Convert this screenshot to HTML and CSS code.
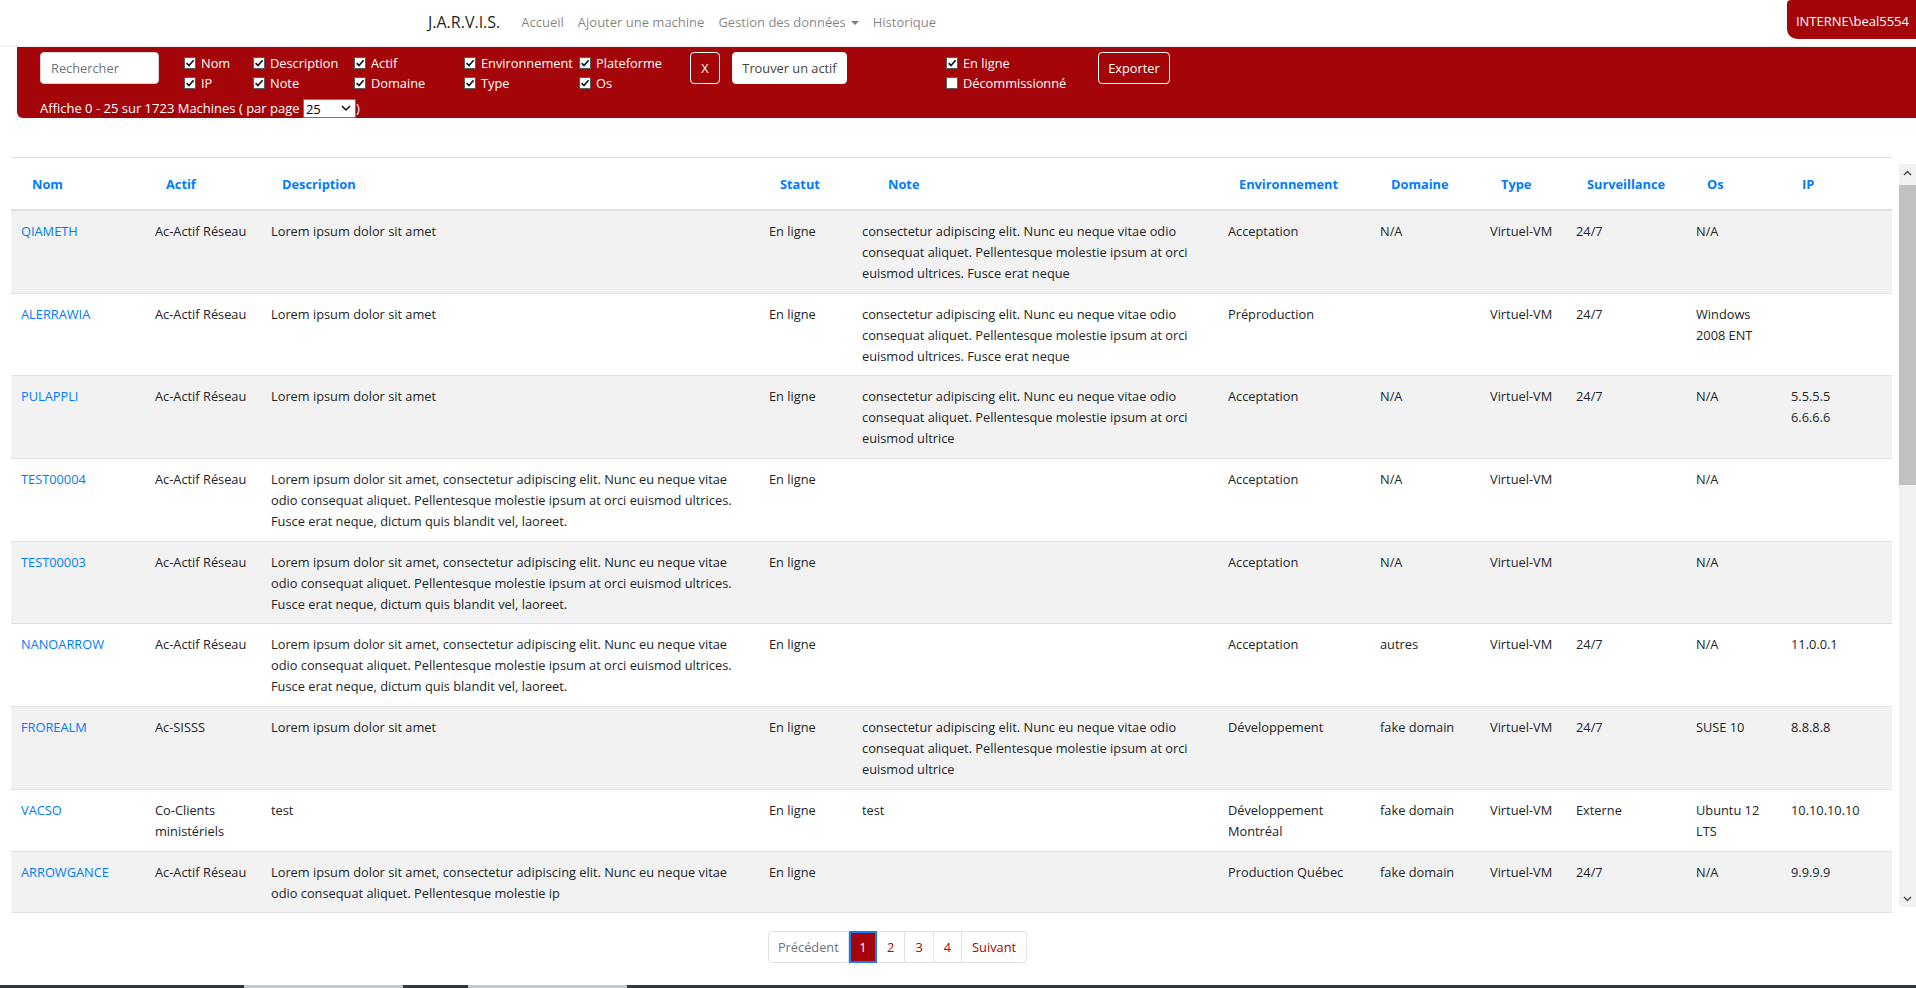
FILE: index.html
```html
<!DOCTYPE html>
<html lang="fr">
<head>
<meta charset="utf-8">
<title>J.A.R.V.I.S.</title>
<link rel="stylesheet" href="styles.css">
</head>
<body>
<header class="navbar">
  <a class="brand">J.A.R.V.I.S.</a>
  <nav class="nav">
    <a class="nav-link">Accueil</a>
    <a class="nav-link">Ajouter une machine</a>
    <a class="nav-link">Gestion des données<span class="caret"></span></a>
    <a class="nav-link">Historique</a>
  </nav>
  <div class="user">INTERNE\beal5554</div>
</header>

<section class="filters">
  <div class="filter-row">
    <input class="search" type="text" placeholder="Rechercher">
    <div class="cb-group g1">
      <label class="cb"><span class="box"><svg viewBox="0 0 10 10"><path d="M1.6 5.2 L4 7.6 L8.6 2.2"/></svg></span>Nom</label>
      <label class="cb"><span class="box"><svg viewBox="0 0 10 10"><path d="M1.6 5.2 L4 7.6 L8.6 2.2"/></svg></span>IP</label>
    </div>
    <div class="cb-group g2">
      <label class="cb"><span class="box"><svg viewBox="0 0 10 10"><path d="M1.6 5.2 L4 7.6 L8.6 2.2"/></svg></span>Description</label>
      <label class="cb"><span class="box"><svg viewBox="0 0 10 10"><path d="M1.6 5.2 L4 7.6 L8.6 2.2"/></svg></span>Note</label>
    </div>
    <div class="cb-group g3">
      <label class="cb"><span class="box"><svg viewBox="0 0 10 10"><path d="M1.6 5.2 L4 7.6 L8.6 2.2"/></svg></span>Actif</label>
      <label class="cb"><span class="box"><svg viewBox="0 0 10 10"><path d="M1.6 5.2 L4 7.6 L8.6 2.2"/></svg></span>Domaine</label>
    </div>
    <div class="cb-group g4">
      <label class="cb"><span class="box"><svg viewBox="0 0 10 10"><path d="M1.6 5.2 L4 7.6 L8.6 2.2"/></svg></span>Environnement</label>
      <label class="cb"><span class="box"><svg viewBox="0 0 10 10"><path d="M1.6 5.2 L4 7.6 L8.6 2.2"/></svg></span>Type</label>
    </div>
    <div class="cb-group g5">
      <label class="cb"><span class="box"><svg viewBox="0 0 10 10"><path d="M1.6 5.2 L4 7.6 L8.6 2.2"/></svg></span>Plateforme</label>
      <label class="cb"><span class="box"><svg viewBox="0 0 10 10"><path d="M1.6 5.2 L4 7.6 L8.6 2.2"/></svg></span>Os</label>
    </div>
    <button class="btn btn-x">X</button>
    <button class="btn btn-find">Trouver un actif</button>
    <div class="cb-group g6">
      <label class="cb"><span class="box"><svg viewBox="0 0 10 10"><path d="M1.6 5.2 L4 7.6 L8.6 2.2"/></svg></span>En ligne</label>
      <label class="cb"><span class="box"></span>Décommissionné</label>
    </div>
    <button class="btn btn-export">Exporter</button>
  </div>
  <div class="info">Affiche 0 - 25 sur 1723 Machines ( par page <span class="select-wrap"><select><option>25</option><option>50</option><option>100</option></select><svg class="chev" viewBox="0 0 10 6"><path d="M1 1 L5 5 L9 1"/></svg></span>)</div>
</section>

<main class="table-area">
  <div class="scroll">
    <table class="grid">
      <colgroup>
        <col class="c-nom"><col class="c-actif"><col class="c-desc"><col class="c-statut"><col class="c-note"><col class="c-env"><col class="c-dom"><col class="c-type"><col class="c-surv"><col class="c-os"><col class="c-ip">
      </colgroup>
      <thead>
        <tr><th>Nom</th><th>Actif</th><th>Description</th><th>Statut</th><th class="th-note">Note</th><th>Environnement</th><th>Domaine</th><th>Type</th><th>Surveillance</th><th>Os</th><th>IP</th></tr>
      </thead>
      <tbody>
        <tr><td><a>QIAMETH</a></td><td>Ac-Actif Réseau</td><td>Lorem ipsum dolor sit amet</td><td>En ligne</td><td>consectetur adipiscing elit. Nunc eu neque vitae odio consequat aliquet. Pellentesque molestie ipsum at orci euismod ultrices. Fusce erat neque</td><td>Acceptation</td><td>N/A</td><td>Virtuel-VM</td><td>24/7</td><td>N/A</td><td></td></tr>
        <tr><td><a>ALERRAWIA</a></td><td>Ac-Actif Réseau</td><td>Lorem ipsum dolor sit amet</td><td>En ligne</td><td>consectetur adipiscing elit. Nunc eu neque vitae odio consequat aliquet. Pellentesque molestie ipsum at orci euismod ultrices. Fusce erat neque</td><td>Préproduction</td><td></td><td>Virtuel-VM</td><td>24/7</td><td>Windows 2008 ENT</td><td></td></tr>
        <tr><td><a>PULAPPLI</a></td><td>Ac-Actif Réseau</td><td>Lorem ipsum dolor sit amet</td><td>En ligne</td><td>consectetur adipiscing elit. Nunc eu neque vitae odio consequat aliquet. Pellentesque molestie ipsum at orci euismod ultrice</td><td>Acceptation</td><td>N/A</td><td>Virtuel-VM</td><td>24/7</td><td>N/A</td><td>5.5.5.5<br>6.6.6.6</td></tr>
        <tr><td><a>TEST00004</a></td><td>Ac-Actif Réseau</td><td>Lorem ipsum dolor sit amet, consectetur adipiscing elit. Nunc eu neque vitae odio consequat aliquet. Pellentesque molestie ipsum at orci euismod ultrices. Fusce erat neque, dictum quis blandit vel, laoreet.</td><td>En ligne</td><td></td><td>Acceptation</td><td>N/A</td><td>Virtuel-VM</td><td></td><td>N/A</td><td></td></tr>
        <tr><td><a>TEST00003</a></td><td>Ac-Actif Réseau</td><td>Lorem ipsum dolor sit amet, consectetur adipiscing elit. Nunc eu neque vitae odio consequat aliquet. Pellentesque molestie ipsum at orci euismod ultrices. Fusce erat neque, dictum quis blandit vel, laoreet.</td><td>En ligne</td><td></td><td>Acceptation</td><td>N/A</td><td>Virtuel-VM</td><td></td><td>N/A</td><td></td></tr>
        <tr><td><a>NANOARROW</a></td><td>Ac-Actif Réseau</td><td>Lorem ipsum dolor sit amet, consectetur adipiscing elit. Nunc eu neque vitae odio consequat aliquet. Pellentesque molestie ipsum at orci euismod ultrices. Fusce erat neque, dictum quis blandit vel, laoreet.</td><td>En ligne</td><td></td><td>Acceptation</td><td>autres</td><td>Virtuel-VM</td><td>24/7</td><td>N/A</td><td>11.0.0.1</td></tr>
        <tr><td><a>FROREALM</a></td><td>Ac-SISSS</td><td>Lorem ipsum dolor sit amet</td><td>En ligne</td><td>consectetur adipiscing elit. Nunc eu neque vitae odio consequat aliquet. Pellentesque molestie ipsum at orci euismod ultrice</td><td>Développement</td><td>fake domain</td><td>Virtuel-VM</td><td>24/7</td><td>SUSE 10</td><td>8.8.8.8</td></tr>
        <tr><td><a>VACSO</a></td><td>Co-Clients ministériels</td><td>test</td><td>En ligne</td><td>test</td><td>Développement Montréal</td><td>fake domain</td><td>Virtuel-VM</td><td>Externe</td><td>Ubuntu 12 LTS</td><td>10.10.10.10</td></tr>
        <tr><td><a>ARROWGANCE</a></td><td>Ac-Actif Réseau</td><td>Lorem ipsum dolor sit amet, consectetur adipiscing elit. Nunc eu neque vitae odio consequat aliquet. Pellentesque molestie ip</td><td>En ligne</td><td></td><td>Production Québec</td><td>fake domain</td><td>Virtuel-VM</td><td>24/7</td><td>N/A</td><td>9.9.9.9</td></tr>
        <tr><td><a>BETAPLEX</a></td><td>Ac-Actif Réseau</td><td>Lorem ipsum dolor sit amet</td><td>En ligne</td><td>consectetur adipiscing elit. Nunc eu neque vitae odio consequat aliquet. Pellentesque molestie ipsum at orci euismod ultrices. Fusce erat neque</td><td>Acceptation</td><td>N/A</td><td>Virtuel-VM</td><td>24/7</td><td>N/A</td><td></td></tr>
        <tr><td><a>CORVINUS</a></td><td>Ac-Actif Réseau</td><td>Lorem ipsum dolor sit amet, consectetur adipiscing elit. Nunc eu neque vitae odio consequat aliquet. Pellentesque molestie ipsum at orci euismod ultrices. Fusce erat neque, dictum quis blandit vel, laoreet.</td><td>En ligne</td><td></td><td>Acceptation</td><td>N/A</td><td>Virtuel-VM</td><td></td><td>N/A</td><td></td></tr>
        <tr><td><a>DATAFORGE</a></td><td>Ac-SISSS</td><td>Lorem ipsum dolor sit amet</td><td>En ligne</td><td>test</td><td>Développement</td><td>fake domain</td><td>Virtuel-VM</td><td>24/7</td><td>SUSE 10</td><td>7.7.7.7</td></tr>
        <tr><td><a>ECHOWAVE</a></td><td>Ac-Actif Réseau</td><td>Lorem ipsum dolor sit amet</td><td>En ligne</td><td>consectetur adipiscing elit. Nunc eu neque vitae odio consequat aliquet. Pellentesque molestie ipsum at orci euismod ultrice</td><td>Préproduction</td><td>N/A</td><td>Virtuel-VM</td><td>24/7</td><td>N/A</td><td></td></tr>
        <tr><td><a>FALCONIX</a></td><td>Co-Clients ministériels</td><td>test</td><td>En ligne</td><td>test</td><td>Production Québec</td><td>fake domain</td><td>Virtuel-VM</td><td>Externe</td><td>Ubuntu 12 LTS</td><td>10.0.0.4</td></tr>
        <tr><td><a>GRIDMAST</a></td><td>Ac-Actif Réseau</td><td>Lorem ipsum dolor sit amet, consectetur adipiscing elit. Nunc eu neque vitae odio consequat aliquet. Pellentesque molestie ipsum at orci euismod ultrices. Fusce erat neque, dictum quis blandit vel, laoreet.</td><td>En ligne</td><td></td><td>Acceptation</td><td>N/A</td><td>Virtuel-VM</td><td></td><td>N/A</td><td></td></tr>
        <tr><td><a>HYDRALINK</a></td><td>Ac-Actif Réseau</td><td>Lorem ipsum dolor sit amet</td><td>En ligne</td><td>consectetur adipiscing elit. Nunc eu neque vitae odio consequat aliquet. Pellentesque molestie ipsum at orci euismod ultrices. Fusce erat neque</td><td>Acceptation</td><td>N/A</td><td>Virtuel-VM</td><td>24/7</td><td>N/A</td><td>4.4.4.4</td></tr>
        <tr><td><a>IONSTACK</a></td><td>Ac-SISSS</td><td>Lorem ipsum dolor sit amet</td><td>En ligne</td><td>test</td><td>Développement Montréal</td><td>fake domain</td><td>Virtuel-VM</td><td>24/7</td><td>SUSE 10</td><td>3.3.3.3</td></tr>
        <tr><td><a>JUNIPERA</a></td><td>Ac-Actif Réseau</td><td>Lorem ipsum dolor sit amet, consectetur adipiscing elit. Nunc eu neque vitae odio consequat aliquet. Pellentesque molestie ip</td><td>En ligne</td><td></td><td>Production Québec</td><td>fake domain</td><td>Virtuel-VM</td><td>24/7</td><td>N/A</td><td>2.2.2.2</td></tr>
        <tr><td><a>KORALINE</a></td><td>Ac-Actif Réseau</td><td>Lorem ipsum dolor sit amet</td><td>En ligne</td><td>consectetur adipiscing elit. Nunc eu neque vitae odio consequat aliquet. Pellentesque molestie ipsum at orci euismod ultrice</td><td>Acceptation</td><td>N/A</td><td>Virtuel-VM</td><td>24/7</td><td>Windows 2008 ENT</td><td></td></tr>
        <tr><td><a>LUMENTRA</a></td><td>Ac-Actif Réseau</td><td>Lorem ipsum dolor sit amet, consectetur adipiscing elit. Nunc eu neque vitae odio consequat aliquet. Pellentesque molestie ipsum at orci euismod ultrices. Fusce erat neque, dictum quis blandit vel, laoreet.</td><td>En ligne</td><td></td><td>Acceptation</td><td>N/A</td><td>Virtuel-VM</td><td></td><td>N/A</td><td></td></tr>
        <tr><td><a>MERIDIAN</a></td><td>Co-Clients ministériels</td><td>test</td><td>En ligne</td><td>test</td><td>Développement</td><td>fake domain</td><td>Virtuel-VM</td><td>Externe</td><td>Ubuntu 12 LTS</td><td>10.10.10.11</td></tr>
        <tr><td><a>NEXORA</a></td><td>Ac-Actif Réseau</td><td>Lorem ipsum dolor sit amet</td><td>En ligne</td><td>consectetur adipiscing elit. Nunc eu neque vitae odio consequat aliquet. Pellentesque molestie ipsum at orci euismod ultrices. Fusce erat neque</td><td>Préproduction</td><td></td><td>Virtuel-VM</td><td>24/7</td><td>N/A</td><td></td></tr>
        <tr><td><a>ORBITEX</a></td><td>Ac-Actif Réseau</td><td>Lorem ipsum dolor sit amet, consectetur adipiscing elit. Nunc eu neque vitae odio consequat aliquet. Pellentesque molestie ipsum at orci euismod ultrices. Fusce erat neque, dictum quis blandit vel, laoreet.</td><td>En ligne</td><td></td><td>Acceptation</td><td>N/A</td><td>Virtuel-VM</td><td></td><td>N/A</td><td></td></tr>
        <tr><td><a>PRISMATA</a></td><td>Ac-SISSS</td><td>Lorem ipsum dolor sit amet</td><td>En ligne</td><td>consectetur adipiscing elit. Nunc eu neque vitae odio consequat aliquet. Pellentesque molestie ipsum at orci euismod ultrice</td><td>Développement</td><td>fake domain</td><td>Virtuel-VM</td><td>24/7</td><td>SUSE 10</td><td>1.1.1.1</td></tr>
        <tr><td><a>QUASARIO</a></td><td>Ac-Actif Réseau</td><td>Lorem ipsum dolor sit amet</td><td>En ligne</td><td>test</td><td>Production Québec</td><td>fake domain</td><td>Virtuel-VM</td><td>24/7</td><td>N/A</td><td>12.0.0.1</td></tr>
      </tbody>
    </table>
  </div>
  <div class="vscroll" aria-hidden="true">
    <div class="sb-btn"><svg viewBox="0 0 9 6"><path d="M1 5 L4.5 1.5 L8 5"/></svg></div>
    <div class="sb-track"><div class="sb-thumb"></div></div>
    <div class="sb-btn"><svg viewBox="0 0 9 6"><path d="M1 1 L4.5 4.5 L8 1"/></svg></div>
  </div>
</main>

<nav class="pager">
  <a class="page disabled">Précédent</a>
  <a class="page active">1</a>
  <a class="page">2</a>
  <a class="page">3</a>
  <a class="page">4</a>
  <a class="page">Suivant</a>
</nav>

<div class="taskbar"><span class="tb-item"></span><span class="tb-item tb-second"></span></div>
</body>
</html>
```

FILE: styles.css
```css
* { box-sizing: border-box; }

html, body { margin: 0; padding: 0; }

body {
  font-family: "Open Sans", "Noto Sans", "Liberation Sans", Arial, sans-serif;
  font-size: 12.8px;
  color: #212529;
  background: #fff;
  display: flex;
  flex-direction: column;
  min-height: 100vh;
}

a { cursor: pointer; }

/* ---------- navbar ---------- */
.navbar {
  display: flex;
  align-items: center;
  height: 47px;
  padding: 0 0 3px 428px;
  border-bottom: 1px solid #ececec;
}

.brand {
  font-size: 16px;
  color: rgba(0, 0, 0, .9);
  margin-right: 14px;
}

.nav { display: flex; align-items: center; }

.nav-link {
  font-size: 13px;
  padding: 0 7px;
  color: rgba(0, 0, 0, .5);
}

.caret {
  display: inline-block;
  width: 0;
  height: 0;
  border-top: 4.5px solid rgba(0, 0, 0, .5);
  border-left: 4px solid transparent;
  border-right: 4px solid transparent;
  margin: 0 0 0 5px;
  vertical-align: middle;
}

.user {
  margin-left: auto;
  align-self: flex-start;
  height: 39px;
  display: flex;
  align-items: center;
  padding: 2px 7px 0 9px;
  background: #a40508;
  color: #fff;
  font-size: 13px;
  border-radius: 4px 0 0 10px;
}

/* ---------- filter band ---------- */
.filters {
  margin-left: 17px;
  height: 71px;
  padding: 5px 0 0 23px;
  background: #a40508;
  color: #fff;
  border-radius: 0 0 0 6px;
}

.filter-row {
  display: flex;
  align-items: flex-start;
  height: 42px;
}

.search {
  width: 119px;
  height: 32px;
  margin-right: 25px;
  padding: 0 10px;
  border: 1px solid #ced4da;
  border-radius: 4px;
  font-family: inherit;
  font-size: 12.8px;
  color: #495057;
  background: #fff;
}
.search::placeholder { color: #6c757d; }

.cb-group {
  display: flex;
  flex-direction: column;
  line-height: 20px;
  padding-top: 1px;
}
.g1 { width: 69px; }
.g2 { width: 101px; }
.g3 { width: 110px; }
.g4 { width: 115px; }
.g5 { width: 111px; }
.g6 { width: 152px; }

.cb {
  display: flex;
  align-items: center;
  white-space: nowrap;
}

.box {
  width: 12px;
  height: 12px;
  margin-right: 5px;
  background: #fff;
  border: 1px solid #5a5a5a;
  display: inline-flex;
  align-items: center;
  justify-content: center;
  flex: none;
}
.box svg { width: 10px; height: 10px; }
.box path { fill: none; stroke: #1a1a1a; stroke-width: 1.7; }

.btn {
  height: 32px;
  border-radius: 4px;
  font-family: inherit;
  font-size: 12.8px;
  padding: 0;
  cursor: pointer;
}
.btn-x {
  width: 30px;
  margin-right: 12px;
  background: transparent;
  border: 1px solid #fff;
  color: #fff;
}
.btn-find {
  width: 115px;
  margin-right: 99px;
  background: #fff;
  border: 1px solid #fff;
  color: #444;
}
.btn-export {
  width: 72px;
  background: transparent;
  border: 1px solid #fff;
  color: #fff;
}

.info {
  height: 19px;
  line-height: 19px;
  margin-top: 5px;
  font-size: 13px;
  white-space: nowrap;
}

.select-wrap {
  position: relative;
  display: inline-block;
  vertical-align: top;
}
.select-wrap select {
  display: block;
  appearance: none;
  -webkit-appearance: none;
  width: 53px;
  height: 19px;
  padding: 0 0 0 2px;
  border: 1px solid #767676;
  border-radius: 0;
  background: #fff;
  color: #000;
  font-family: inherit;
  font-size: 13px;
}
.chev {
  position: absolute;
  right: 5px;
  top: 6px;
  width: 10px;
  height: 6px;
  pointer-events: none;
}
.chev path { fill: none; stroke: #000; stroke-width: 1.4; }

/* ---------- table ---------- */
.table-area {
  position: relative;
  margin: 39px 0 0 11px;
}

.scroll {
  height: 756px;
  overflow-y: scroll;
  scrollbar-width: none;
}

/* drawn scrollbar lying over the right edge of the scroll area */
.vscroll {
  position: absolute;
  top: 7px;
  right: 0;
  bottom: 6px;
  width: 17px;
  display: flex;
  flex-direction: column;
  background: #f1f1f1;
}
.sb-btn {
  height: 17px;
  flex: none;
  display: flex;
  align-items: center;
  justify-content: center;
}
.sb-btn svg { width: 9px; height: 6px; }
.sb-btn path { fill: none; stroke: #505050; stroke-width: 1.5; }
.sb-track { flex: 1; padding-top: 4px; }
.sb-thumb { height: 300px; background: #c1c1c1; }

.grid {
  width: 1881px;
  border-collapse: collapse;
  table-layout: fixed;
}
.c-nom { width: 134px; }
.c-actif { width: 116px; }
.c-desc { width: 498px; }
.c-statut { width: 93px; }
.c-note { width: 366px; }
.c-env { width: 152px; }
.c-dom { width: 110px; }
.c-type { width: 86px; }
.c-surv { width: 120px; }
.c-os { width: 95px; }
.c-ip { width: 111px; }

.grid th {
  text-align: left;
  color: #007bff;
  font-weight: 700;
  line-height: 21px;
  padding: 16px 6px 14px 21px;
  border-top: 1px solid #dee2e6;
  border-bottom: 2px solid #dee2e6;
  vertical-align: bottom;
  white-space: nowrap;
}
.grid th.th-note { padding-left: 36px; }

.grid td {
  line-height: 21px;
  padding: 10px 10px 8.7px;
  border-top: 1px solid #dee2e6;
  vertical-align: top;
}
.grid tbody tr:nth-child(odd) { background: #f2f2f2; }
.grid td a { color: #007bff; text-decoration: none; }

/* ---------- pagination ---------- */
.pager {
  display: flex;
  justify-content: center;
  padding-right: 121px;
  margin-top: 18px;
}
.page {
  display: block;
  height: 32px;
  line-height: 30px;
  padding: 0 10px;
  border: 1px solid #dee2e6;
  border-left: 0;
  color: #a40508;
  background: #fff;
  font-size: 12.8px;
}
.page:first-child {
  padding: 0 9px;
  border-left: 1px solid #dee2e6;
  border-radius: 4px 0 0 4px;
}
.page:last-child { border-radius: 0 4px 4px 0; }
.page.disabled { color: #6c757d; }
.page.active {
  padding: 0 8.5px;
  line-height: 28px;
  background: #a40508;
  color: #fff;
  border: 2px solid #1a7cf5;
}

/* ---------- bottom strip ---------- */
.taskbar {
  margin-top: auto;
  height: 3px;
  display: flex;
  padding-left: 244px;
  background: #34383d;
}
.tb-item { width: 159px; background: #c5c8cc; }
.tb-second { margin-left: 65px; }
```
